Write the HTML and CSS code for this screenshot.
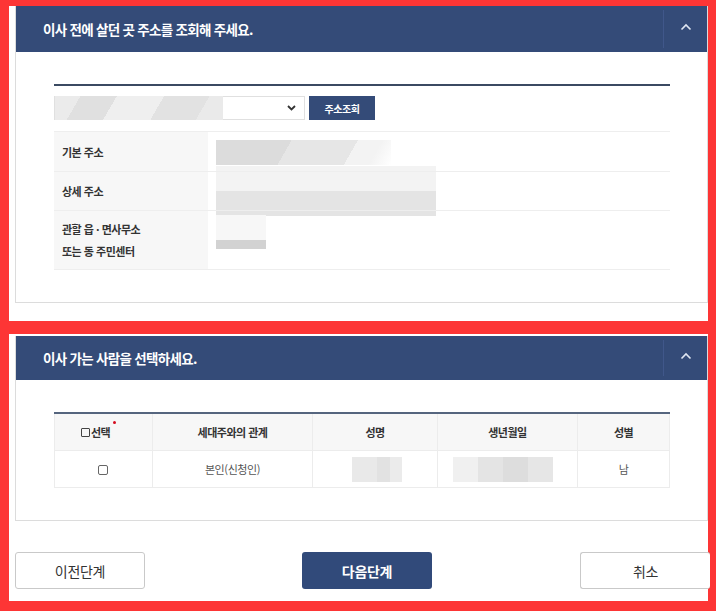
FILE: index.html
```html
<!DOCTYPE html>
<html lang="ko">
<head>
    <meta charset="utf-8">
    <title>전입신고</title>
    <link rel="stylesheet" href="styles.css">
</head>
<body>

<div class="frame frame-top">
    <div class="panel">
        <div class="panel-head">
            <h3>이사 전에 살던 곳 주소를 조회해 주세요.</h3>
            <button class="fold" type="button">
                <svg width="12" height="8" viewBox="0 0 12 8"><path d="M1.5 6.5 L6 2 L10.5 6.5" fill="none" stroke="#dfe6f2" stroke-width="1.6"/></svg>
            </button>
        </div>
        <div class="panel-body">
            <div class="addr-search">
                <div class="addr-select">
                    <span class="blur blur-select"></span>
                    <svg class="caret" width="9" height="6" viewBox="0 0 9 6"><path d="M1 1 L4.5 4.5 L8 1" fill="none" stroke="#333" stroke-width="1.8"/></svg>
                </div>
                <button class="btn-small" type="button">주소조회</button>
            </div>
            <table class="addr-table">
                <tr class="row-a">
                    <th>기본 주소</th>
                    <td><span class="blur blur-base"></span></td>
                </tr>
                <tr class="row-b">
                    <th>상세 주소</th>
                    <td><span class="blur blur-detail"></span></td>
                </tr>
                <tr class="row-c">
                    <th>관할 읍 · 면사무소<br>또는 동 주민센터</th>
                    <td><span class="blur blur-office"></span></td>
                </tr>
            </table>
        </div>
    </div>
</div>

<div class="frame frame-bottom">
    <div class="panel">
        <div class="panel-head short">
            <h3>이사 가는 사람을 선택하세요.</h3>
            <button class="fold" type="button">
                <svg width="12" height="8" viewBox="0 0 12 8"><path d="M1.5 6.5 L6 2 L10.5 6.5" fill="none" stroke="#dfe6f2" stroke-width="1.6"/></svg>
            </button>
        </div>
        <div class="panel-body">
            <table class="people">
                <colgroup>
                    <col style="width:98px">
                    <col style="width:160px">
                    <col style="width:125px">
                    <col style="width:140px">
                    <col>
                </colgroup>
                <thead>
                <tr>
                    <th><span class="pick"><span class="box"></span>선택<span class="req"></span></span></th>
                    <th>세대주와의 관계</th>
                    <th>성명</th>
                    <th>생년월일</th>
                    <th>성별</th>
                </tr>
                </thead>
                <tbody>
                <tr>
                    <td><span class="box big"></span></td>
                    <td>본인(신청인)</td>
                    <td><span class="blur blur-name"></span></td>
                    <td><span class="blur blur-birth"></span></td>
                    <td>남</td>
                </tr>
                </tbody>
            </table>
        </div>
    </div>
    <div class="actions">
        <button class="btn btn-line" type="button">이전단계</button>
        <button class="btn btn-main" type="button">다음단계</button>
        <button class="btn btn-line btn-cancel" type="button">취소</button>
    </div>
</div>

</body>
</html>
```

FILE: styles.css
```css
body {
    margin: 0;
    padding: 0;
    width: 720px;
    background: #ffffff;
    font-family: "Noto Sans CJK KR", "Noto Sans", sans-serif;
    color: #333;
}

.frame {
    box-sizing: border-box;
    width: 716px;
    border-color: #fd3535;
    border-style: solid;
    background: #ffffff;
}

.frame-top {
    border-width: 6px 8px 6px 9px;
    padding: 0 0 18px 6px;
}

.frame-bottom {
    border-width: 7px 8px 10px 9px;
    padding: 2px 0 12px 6px;
}

.panel {
    border: 1px solid #dcdcdc;
    border-top: none;
}

.panel-head {
    display: flex;
    align-items: stretch;
    height: 46px;
    background: #344b78;
    color: #ffffff;
}

.panel-head.short {
    height: 44px;
}

.panel-head h3 {
    flex: 1;
    margin: 0;
    padding-left: 27px;
    align-self: center;
    font-size: 13.5px;
    font-weight: bold;
    letter-spacing: -0.7px;
}

.fold {
    width: 44px;
    border: none;
    border-left: 1px solid #40578a;
    margin: 4px 0;
    background: transparent;
    display: flex;
    align-items: center;
    justify-content: center;
    padding: 0 0 4px 0;
}

.panel-body {
    padding: 32px 37px 32px 38px;
}

/* ligne foncée au-dessus des blocs */
.addr-search {
    border-top: 2px solid #3b4a62;
    padding-top: 10px;
    display: flex;
    gap: 4px;
}

.addr-select {
    box-sizing: border-box;
    width: 251px;
    height: 24px;
    border: 1px solid #e0e0e0;
    display: flex;
    align-items: center;
    justify-content: space-between;
    padding-right: 8px;
}

.blur {
    display: block;
}

.blur-select {
    width: 168px;
    height: 24px;
    margin-top: -1px;
    margin-bottom: -1px;
    background: linear-gradient(120deg, #ebebeb 0 14%, #e0e0e0 14% 34%, #efefef 34% 60%, #e2e2e2 60% 85%, #eaeaea 85%);
}

.btn-small {
    height: 24px;
    width: 66px;
    border: none;
    background: #344b78;
    color: #ffffff;
    font-family: inherit;
    font-size: 10px;
    font-weight: bold;
    letter-spacing: -0.5px;
    padding: 0;
}

.addr-table {
    width: 100%;
    margin-top: 11px;
    border-collapse: collapse;
}

.addr-table tr {
    border-top: 1px solid #eeeeee;
    border-bottom: 1px solid #eeeeee;
}

.addr-table th {
    width: 145px;
    background: #f7f7f7;
    text-align: left;
    padding-left: 8px;
    font-size: 11px;
    font-weight: bold;
    letter-spacing: -0.5px;
    line-height: 22px;
    color: #333;
}

.addr-table td {
    padding: 0 0 0 8px;
    vertical-align: top;
}

.row-a { height: 40px; }
.row-b { height: 39px; }
.row-c { height: 59px; }

.blur-base {
    width: 175px;
    height: 25px;
    margin-top: 8px;
    background: linear-gradient(120deg, #dcdcdc 0 40%, #e6e6e6 40% 75%, #f3f3f3 75% 88%, #ffffff 100%);
}

.blur-detail {
    width: 220px;
    height: 50px;
    margin-top: -6px;
    margin-bottom: -6px;
    background: linear-gradient(to bottom, #f3f3f3 0 50%, #e4e4e4 50%);
}

.blur-office {
    width: 50px;
    height: 34px;
    margin-top: 4px;
    background: linear-gradient(to bottom, #f7f7f7 0 74%, #d2d2d2 74%);
}

.people {
    width: 100%;
    border-collapse: collapse;
    border-top: 2px solid #55657e;
    text-align: center;
}

.people th {
    height: 36px;
    padding: 0;
    background: #f7f7f7;
    font-size: 11px;
    font-weight: bold;
    letter-spacing: -0.5px;
    color: #333;
    border: 1px solid #ececec;
    border-top: none;
}

.people td {
    height: 36px;
    padding: 0;
    border: 1px solid #ececec;
    color: #555;
    font-size: 11px;
    letter-spacing: -0.4px;
}

.pick {
    display: inline-flex;
    align-items: center;
    margin-right: 10px;
}

.box {
    display: inline-block;
    box-sizing: border-box;
    width: 9px;
    height: 9px;
    border: 1px solid #444;
    border-radius: 1px;
    margin-right: 1px;
    vertical-align: -1px;
}

.box.big {
    width: 10px;
    height: 10px;
    border-color: #666;
    border-radius: 2px;
}

.req {
    align-self: flex-start;
    width: 3px;
    height: 3px;
    border-radius: 50%;
    background: #d40a1e;
    margin: -3px 0 0 3px;
}

.blur-name {
    width: 50px;
    height: 25px;
    margin-left: 39px;
    background: linear-gradient(to right, #e9e9e9 0 50%, #e2e2e2 50% 76%, #ebebeb 76%);
}

.blur-birth {
    width: 100px;
    height: 25px;
    margin-left: 15px;
    background: linear-gradient(to right, #f0f0f0 0 25%, #e4e4e4 25% 50%, #dddddd 50% 75%, #e6e6e6 75%);
}

.actions {
    display: flex;
    margin-top: 31px;
}

.btn {
    width: 130px;
    height: 37px;
    border-radius: 3px;
    font-family: inherit;
    font-size: 14px;
    letter-spacing: -0.3px;
    padding: 0;
}

.btn-line {
    background: #ffffff;
    border: 1px solid #c9c9c9;
    color: #333;
}

.btn-main {
    margin-left: 157px;
    background: #314a7a;
    border: none;
    color: #ffffff;
    font-weight: bold;
}

.btn-cancel {
    margin-left: auto;
    margin-right: -2px;
    border-right: none;
}
```
